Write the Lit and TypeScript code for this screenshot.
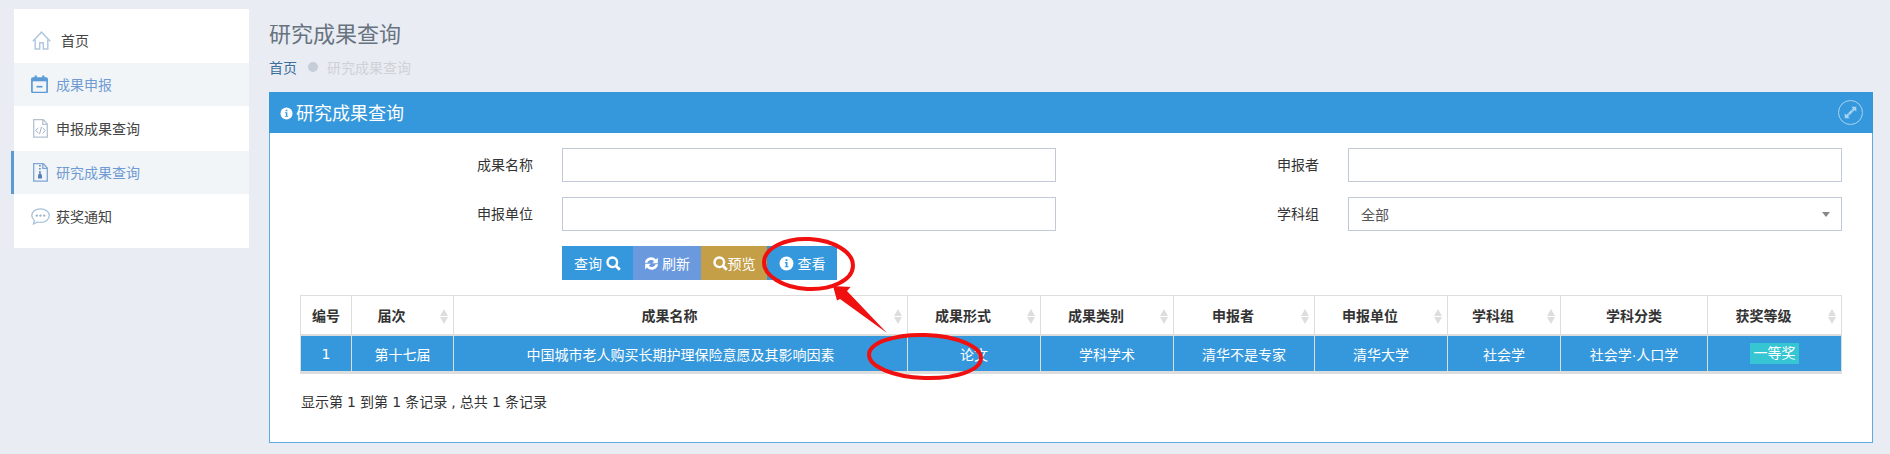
import { LitElement, html, css, svg } from "lit";
import { customElement } from "lit/decorators.js";

const I = {
  home: svg`<path d="M.8 10.200 9.500 1.200l8.700 9M3.200 8.500V18h4.500v-6.200h3.600V18h4.500V8.500" fill="none" stroke="#b2c8de" stroke-width="1.500"/>`,
  cal: svg`<rect x=".9" y="3" width="15.200" height="14.500" rx="1" fill="none" stroke="#5b9bd5" stroke-width="1.700"/><path d="M.9 3h15.200v3.300H.9z" fill="#5b9bd5"/><path d="M4.700 .5v4.500M12.300 .5v4.500" stroke="#5b9bd5" stroke-width="2.200"/><path d="M5.500 11.700h6" stroke="#5b9bd5" stroke-width="1.700"/>`,
  code: svg`<path d="M.7 .7h9.600l4 4.200v13.300H.7zM9.800 .7v4.700h4.500" fill="none" stroke="#b3c2d3" stroke-width="1.300"/><path d="M5.300 8.700l-2.500 2.800 2.500 2.800M9.700 8.700l2.500 2.800-2.500 2.800M8.500 7.800l-2 7.400" fill="none" stroke="#a3b3c6" stroke-width="1"/>`,
  zip: svg`<path d="M.7 .7h9.600l4 4.200v13.300H.7zM9.800 .7v4.700h4.500" fill="none" stroke="#7ea6d6" stroke-width="1.300"/><path d="M6 2h1.800v1.500H6zM6 5h1.800v1.500H6zM6 8h1.800v2.500H6z" fill="#6f93c4"/><path d="M5 12.500l1-2h2l1 2v3H5z" fill="#557fb6"/>`,
  chat: svg`<path d="M9.500 .8c5 0 8.800 3 8.800 6.800s-3.800 6.800-8.800 6.800c-1 0-2-.1-2.900-.4L2.500 16l.9-3.500C1.800 11.300.8 9.500.8 7.600.8 3.800 4.500.8 9.500.8z" fill="none" stroke="#a9c1d9" stroke-width="1.300"/><circle cx="5.800" cy="7.600" r="1.200" fill="#9db4cc"/><circle cx="9.500" cy="7.600" r="1.200" fill="#9db4cc"/><circle cx="13.200" cy="7.600" r="1.200" fill="#9db4cc"/>`,
  info: svg`<circle cx="7" cy="7" r="6.500" fill="currentColor"/><path d="M5.500 5.700h2.400v3.900h.9v1H5.400v-1h.9V6.700h-.8zM6.100 3h1.800v1.700H6.100z" fill="var(--ic,#3598dc)"/>`,
  search: svg`<circle cx="6.300" cy="6.300" r="4.800" fill="none" stroke="currentColor" stroke-width="2.400"/><path d="M9.800 9.800l4 4" stroke="currentColor" stroke-width="2.800"/>`,
  refresh: svg`<path d="M.8 6.200a6 6 0 0 1 10.400-3L12.900 1.500v5.300H7.600l1.900-1.900A3.700 3.700 0 0 0 3.200 6.200zM13.200 7.800a6 6 0 0 1-10.400 3L1.100 12.500V7.200h5.300l-1.900 1.900a3.700 3.700 0 0 0 6.300-1.300z" fill="currentColor"/>`,
};

const cols = [
  { t: "编号", w: 52, s: false, v: "1" },
  { t: "届次", w: 102, s: true, v: "第十七届" },
  { t: "成果名称", w: 454, s: true, v: "中国城市老人购买长期护理保险意愿及其影响因素" },
  { t: "成果形式", w: 133, s: true, v: "论文" },
  { t: "成果类别", w: 133, s: true, v: "学科学术" },
  { t: "申报者", w: 141, s: true, v: "清华不是专家" },
  { t: "申报单位", w: 133, s: true, v: "清华大学" },
  { t: "学科组", w: 113, s: true, v: "社会学" },
  { t: "学科分类", w: 147, s: false, v: "社会学·人口学" },
  { t: "获奖等级", w: 134, s: true, v: "一等奖" },
];

@customElement("app-root")
export class AppRoot extends LitElement {
  static styles = css`
    :host { display: block; width: 1890px; height: 454px; overflow: hidden; position: relative; background: #e9ecf3;
      font-family: "Liberation Sans", "Noto Sans CJK SC", sans-serif; font-size: 14px; color: #333; }
    .page { display: flex; align-items: flex-start; padding: 9px 17px 0 14px; }
    .side { width: 235px; flex: none; background: #fff; height: 239px; box-sizing: border-box; padding-top: 12px; margin-right: 20px; }
    .item { display: flex; align-items: center; height: 44px; padding-left: 17px; gap: 7px; color: #444; font-size: 14px; position: relative; box-sizing: border-box; }
    .item svg { flex: none; }
    .first { height: 42px; padding-left: 18px; padding-bottom: 4px; gap: 10px; }
    .on { background: #f2f5f8; color: #6f9bd2; height: 43px; padding-bottom: 1px; }
    .cal { gap: 8px; }
    .chat { gap: 6px; }
    .bar::before { content: ""; position: absolute; left: -3px; top: 0; bottom: 0; width: 3px; background: #5b9bd5; }
    .tall { height: 45px; padding-bottom: 1px; }
    .main { flex: 1; min-width: 0; }
    h1 { margin: 0; font-weight: 400; font-size: 22px; line-height: 30px; color: #67737f; padding-top: 11px; }
    .crumb { display: flex; align-items: center; height: 24px; margin-top: 5px; margin-bottom: 13px; font-size: 14px; }
    .crumb a { color: #3c6e9d; }
    .dot { width: 10px; height: 10px; border-radius: 50%; background: #c5cdd8; margin: 0 9px 0 11px; }
    .crumb span:last-child { color: #cfd2d6; }
    .panel { border: 1px solid #5aaae6; border-top: 0; background: #fff; height: 351px; box-sizing: border-box; }
    .head { height: 41px; margin: 0 -1px; background: #3598dc; color: #fff; display: flex; align-items: center; padding-left: 11px; font-size: 18px; gap: 3px; }
    .title { padding-bottom: 2px; }
    .head .ic { width: 13px; height: 13px; --ic: #3598dc; flex: none; margin-top: 1px; color: #fff; }
    .head .exp { margin-left: auto; margin-right: 10px; width: 25px; height: 25px; border: 1px solid #a9d3f0; border-radius: 50%; box-sizing: border-box; display: flex; align-items: center; justify-content: center; }
    .exp svg { width: 13px; height: 13px; }
    .form { padding: 15px 30px 0 0; display: grid; grid-template-columns: 292px 494px 292px 494px; row-gap: 15px; align-items: center; }
    .lab { text-align: right; padding-right: 29px; padding-bottom: 2px; font-size: 14px; color: #333; }
    .inp { height: 34px; border: 1px solid #c2cad8; box-sizing: border-box; display: flex; align-items: center; justify-content: space-between; padding: 0 11px 0 12px; color: #555; font-size: 14px; }
    .caret { width: 0; height: 0; border: 4px solid transparent; border-top: 5px solid #888; border-bottom: 0; }
    .btns { display: flex; margin: 15px 0 0 292px; height: 34px; }
    .btn { display: flex; align-items: center; justify-content: center; color: #fff; font-size: 14px; gap: 4px; }
    .btn svg { width: 15px; height: 15px; flex: none; --ic: #3598dc; }
    .query { width: 71px; background: #3598dc; }
    .refresh { width: 68px; background: #6a99de; gap: 3px; }
    .preview { width: 66px; background: #c49f47; gap: 0; }
    .view { width: 70px; background: #3598dc; gap: 4px; }
    .view svg { color: #fff; }
    .table { margin: 15px 0 0 30px; width: 1542px; }
    .tr { display: flex; }
    .th { height: 41px; border: 1px solid #ddd; border-left: 0; border-bottom-width: 2px; box-sizing: border-box; display: flex; align-items: center; justify-content: center; font-weight: 700; font-size: 14px; color: #333; position: relative; }
    .th.sorted { padding-right: 22px; }
    .tr .c0 { border-left: 1px solid #ddd; }
    .td { height: 38px; border-right: 1px solid #ddd; border-bottom: 3px solid #ddd; box-sizing: border-box; background: #3598dc; color: #fff; display: flex; align-items: center; justify-content: center; font-size: 14px; }
    .td.c0 { font-family: "DejaVu Sans", "Noto Sans CJK SC", sans-serif; }
    .badge { background: #36c6d3; height: 21px; line-height: 21px; width: 49px; text-align: center; white-space: nowrap; }
    .sort { position: absolute; right: 5px; top: 13px; width: 8px; height: 15px; display: flex; flex-direction: column; justify-content: space-between; align-items: center; }
    .sort i { width: 0; height: 0; border-left: 4px solid transparent; border-right: 4px solid transparent; }
    .sort i:first-child { border-bottom: 7px solid #ddd; }
    .sort i:last-child { border-top: 7px solid #ddd; }
    .foot { margin: 18px 0 0 31px; font-size: 14px; line-height: 20px; color: #333; word-spacing: -0.35px; font-family: "DejaVu Sans", "Noto Sans CJK SC", sans-serif; }
    .mark { position: absolute; left: 0; top: 0; width: 1890px; height: 454px; pointer-events: none; }
  `;

  render() {
    return html`
      <div class="page">
        <aside class="side">
          <div class="item first"><svg width="19" height="19" viewBox="0 0 19 19">${I.home}</svg>首页</div>
          <div class="item on cal"><svg width="17" height="18" viewBox="0 0 17 18">${I.cal}</svg>成果申报</div>
          <div class="item tall"><svg width="18" height="19" viewBox="-2 0 18 19">${I.code}</svg>申报成果查询</div>
          <div class="item on bar"><svg width="18" height="19" viewBox="-2 0 18 19">${I.zip}</svg>研究成果查询</div>
          <div class="item chat"><svg width="19" height="17" viewBox="0 0 19 17">${I.chat}</svg>获奖通知</div>
        </aside>
        <main class="main">
          <h1>研究成果查询</h1>
          <div class="crumb"><a>首页</a><span class="dot"></span><span>研究成果查询</span></div>
          <section class="panel">
            <div class="head">
              <svg class="ic" viewBox="0 0 14 14">${I.info}</svg><span class="title">研究成果查询</span>
              <span class="exp"><svg viewBox="0 0 13 13"><path d="M7.300 .8h5v5l-1.700-1.700-1.300 1.300L7.600 3.700l1.300-1.300zM5.700 12.200h-5v-5l1.700 1.700 1.300-1.300 1.700 1.700-1.300 1.300zM4 7.300L7.300 4 9 5.700 5.700 9z" fill="#a9d3f0"/></svg></span>
            </div>
            <div class="form">
              <div class="lab">成果名称</div><div class="inp"></div>
              <div class="lab">申报者</div><div class="inp"></div>
              <div class="lab">申报单位</div><div class="inp"></div>
              <div class="lab">学科组</div><div class="inp">全部<span class="caret"></span></div>
            </div>
            <div class="btns">
              <div class="btn query">查询<svg viewBox="0 0 15 15">${I.search}</svg></div>
              <div class="btn refresh"><svg viewBox="0 0 14 14">${I.refresh}</svg>刷新</div>
              <div class="btn preview"><svg viewBox="0 0 15 15">${I.search}</svg>预览</div>
              <div class="btn view"><svg viewBox="0 0 14 14">${I.info}</svg>查看</div>
            </div>
            <div class="table">
              <div class="tr">
                ${cols.map((c, i) => html`<div class="th ${i === 0 ? "c0" : ""} ${c.s ? "sorted" : ""}" style="width:${c.w}px">${c.t}${c.s ? html`<span class="sort"><i></i><i></i></span>` : ""}</div>`)}
              </div>
              <div class="tr">
                ${cols.map((c, i) => html`<div class="td ${i === 0 ? "c0" : ""}" style="width:${c.w}px">${i === 9 ? html`<span class="badge">${c.v}</span>` : c.v}</div>`)}
              </div>
            </div>
            <div class="foot">显示第 1 到第 1 条记录 , 总共 1 条记录</div>
          </section>
        </main>
      </div>
      <svg class="mark" viewBox="0 0 1890 454" fill="none">
        <ellipse cx="808.500" cy="264" rx="44.500" ry="25" stroke="#f01010" stroke-width="4" transform="rotate(3 808.500 264)"/>
        <ellipse cx="925" cy="356.500" rx="56" ry="21.500" stroke="#f01010" stroke-width="4" transform="rotate(2 925 356.500)"/>
        <path d="M833 286 L850.500 287 L847 291 L887 333 L840 299 L837 300.500 Z" fill="#f01010"/>
      </svg>
    `;
  }
}
